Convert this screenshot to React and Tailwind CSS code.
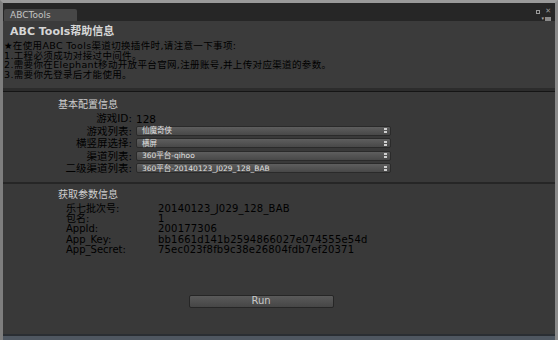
import React from 'react';

const font = { fontFamily: '"DejaVu Sans", "Noto Sans CJK SC", sans-serif' };

const Dropdown = ({ text }) => (
  <div className="flex h-[10px] w-[255px] items-center justify-between rounded-[2px] border border-[#2a2a2a] bg-gradient-to-b from-[#5e5e5e] to-[#484848] pl-[5px] pr-[3px]">
    <span className="text-[7.5px] leading-none text-[#e0e0e0]">{text}</span>
    <span className="flex flex-col items-center gap-[1px]">
      <span className="h-[2px] w-[3px] bg-[#cfcfcf]" />
      <span className="h-[2px] w-[3px] bg-[#cfcfcf]" />
    </span>
  </div>
);

const ConfigRow = ({ label, children }) => (
  <div className="flex h-[12.5px] items-center">
    <div className="w-[129px] text-right text-[10.5px] leading-none text-black">{label}</div>
    <div className="pl-[4px]">{children}</div>
  </div>
);

const ParamRow = ({ label, value }) => (
  <div className="flex h-[10.3px] items-center text-[10px] leading-none text-black">
    <div className="w-[155px] shrink-0 pl-[63px] whitespace-nowrap">{label}</div>
    <div className="whitespace-nowrap tracking-[0.2px]">{value}</div>
  </div>
);

const App = () => {
  return (
    <div className="h-[340px] w-[558px] overflow-hidden bg-[#d8d8d8]" style={font}>
      <div className="flex h-full flex-col border-t-[3px] border-l-[3px] border-r-[3px] border-t-[#9a9a9a] border-l-[#7e7e7e] border-r-[#8a8a8a] bg-[#3a3a3a]">
        {/* tab bar */}
        <div className="flex h-[18px] items-end justify-between bg-[#262626] pl-[1px] pr-[4px]">
          <div className="flex h-[12px] w-[73px] items-center rounded-t-[2px] bg-[#474747] pl-[6px] text-[9px] leading-none text-[#c4c4c4]">
            ABCTools
          </div>
          <div className="flex flex-col items-end self-start pt-[5px]">
            <div className="flex items-center gap-[5px]">
              <span className="h-[4px] w-[4px] border border-[#9a9a9a]" />
              <span className="text-[7px] leading-none text-[#9a9a9a]">✕</span>
            </div>
            <div className="mt-[1px] flex items-center gap-[1px]">
              <span className="text-[5px] leading-none text-[#aaa]">▾</span>
              <span className="h-[4px] w-[6px] bg-[#8a8a8a]" />
            </div>
          </div>
        </div>

        {/* help */}
        <div className="h-[67px] bg-[#3b3b3b] pl-[7px] pt-[5px]">
          <div className="text-[11px] font-bold leading-none text-[#d6d6d6]">ABC Tools帮助信息</div>
          <div className="mt-[4px] -ml-[6px] text-[9.5px] leading-[9.6px] tracking-[0.35px] text-black">
            <div>★在使用ABC Tools渠道切换插件时,请注意一下事项:</div>
            <div>1.工程必须成功对接过中间件。</div>
            <div>2.需要你在Elephant移动开放平台官网,注册账号,并上传对应渠道的参数。</div>
            <div>3.需要你先登录后才能使用。</div>
          </div>
        </div>
        <div className="h-[3px] bg-[#2c2c2c]" />
        <div className="h-[1px] bg-[#151515]" />

        {/* basic config */}
        <div className="bg-[#393939] pt-[8px] pb-[7px]">
          <div className="pl-[55px] text-[10px] leading-none text-[#cfcfcf]">基本配置信息</div>
          <div className="mt-[2px]">
            <ConfigRow label="游戏ID:">
              <span className="text-[10.5px] leading-none text-black">128</span>
            </ConfigRow>
            <ConfigRow label="游戏列表:">
              <Dropdown text="仙魔奇侠" />
            </ConfigRow>
            <ConfigRow label="横竖屏选择:">
              <Dropdown text="横屏" />
            </ConfigRow>
            <ConfigRow label="渠道列表:">
              <Dropdown text="360平台-qihoo" />
            </ConfigRow>
            <ConfigRow label="二级渠道列表:">
              <Dropdown text="360平台-20140123_J029_128_BAB" />
            </ConfigRow>
          </div>
        </div>
        <div className="h-[2px] bg-[#262626]" />

        {/* params */}
        <div className="flex flex-1 flex-col bg-[#393939] pt-[6px]">
          <div className="pl-[55px] text-[10px] leading-none text-[#cfcfcf]">获取参数信息</div>
          <div className="mt-[4px]">
            <ParamRow label="乐七批次号:" value="20140123_J029_128_BAB" />
            <ParamRow label="包名:" value="1" />
            <ParamRow label="AppId:" value=" 200177306" />
            <ParamRow label="App_Key:" value="bb1661d141b2594866027e074555e54d" />
            <ParamRow label="App_Secret:" value="75ec023f8fb9c38e26804fdb7ef20371" />
          </div>
          <div className="flex flex-1 items-start justify-center pt-[40px] pr-[36px]">
            <button className="flex h-[13px] w-[145px] items-center justify-center rounded-[2px] border border-[#262626] bg-gradient-to-b from-[#5a5a5a] to-[#464646] text-[10px] leading-none text-[#c8c8c8]">
              Run
            </button>
          </div>
        </div>
        <div className="h-[2px] bg-[#2a2e33]" />
        <div className="h-[4px] bg-[#4f5761]" />
      </div>
    </div>
  );
};

export default App;
